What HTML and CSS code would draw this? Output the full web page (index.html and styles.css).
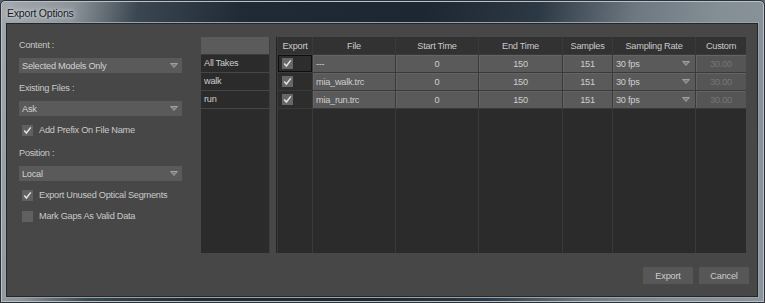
FILE: index.html
```html
<!DOCTYPE html>
<html>
<head>
<meta charset="utf-8">
<link rel="stylesheet" href="styles.css">
</head>
<body>
<div class="window">
  <div class="titlebar"><span class="title">Export Options</span></div>
  <div class="client">
    <div class="main">
      <div class="options">
        <div class="label first">Content :</div>
        <div class="combo"><span>Selected Models Only</span><svg class="arrow" width="8" height="5" viewBox="0 0 8 5"><path d="M0.5 0.5 H7.5 L4 4.5 Z" fill="#7e7e7e" stroke="#acacac" stroke-width="0.8"/></svg></div>
        <div class="label">Existing Files :</div>
        <div class="combo"><span>Ask</span><svg class="arrow" width="8" height="5" viewBox="0 0 8 5"><path d="M0.5 0.5 H7.5 L4 4.5 Z" fill="#7e7e7e" stroke="#acacac" stroke-width="0.8"/></svg></div>
        <div class="check c1"><span class="box"><svg width="11" height="11" viewBox="0 0 11 11"><path d="M2.2 5.6 L4.4 8 L8.8 2.4" fill="none" stroke="#e2e2e2" stroke-width="1.5"/></svg></span>Add Prefix On File Name</div>
        <div class="label">Position :</div>
        <div class="combo"><span>Local</span><svg class="arrow" width="8" height="5" viewBox="0 0 8 5"><path d="M0.5 0.5 H7.5 L4 4.5 Z" fill="#7e7e7e" stroke="#acacac" stroke-width="0.8"/></svg></div>
        <div class="check c2"><span class="box"><svg width="11" height="11" viewBox="0 0 11 11"><path d="M2.2 5.6 L4.4 8 L8.8 2.4" fill="none" stroke="#e2e2e2" stroke-width="1.5"/></svg></span>Export Unused Optical Segments</div>
        <div class="check c3"><span class="box"></span>Mark Gaps As Valid Data</div>
      </div>

      <div class="takes">
        <div class="takes-head"></div>
        <div class="take">All Takes</div>
        <div class="take">walk</div>
        <div class="take">run</div>
        <div class="takes-fill"></div>
      </div>

      <div class="splitter"></div>

      <div class="grid">
        <div class="hd">Export</div>
        <div class="hd">File</div>
        <div class="hd">Start Time</div>
        <div class="hd">End Time</div>
        <div class="hd">Samples</div>
        <div class="hd">Sampling Rate</div>
        <div class="hd">Custom</div>

        <div class="cell exp focus"><span class="box"><svg width="11" height="11" viewBox="0 0 11 11"><path d="M2.2 5.6 L4.4 8 L8.8 2.4" fill="none" stroke="#e2e2e2" stroke-width="1.5"/></svg></span></div>
        <div class="cell left">---</div>
        <div class="cell">0</div>
        <div class="cell">150</div>
        <div class="cell">151</div>
        <div class="cell rate"><span>30 fps</span><svg class="arrow" width="8" height="5" viewBox="0 0 8 5"><path d="M0.5 0.5 H7.5 L4 4.5 Z" fill="#7e7e7e" stroke="#acacac" stroke-width="0.8"/></svg></div>
        <div class="cell custom">30.00</div>

        <div class="cell exp"><span class="box"><svg width="11" height="11" viewBox="0 0 11 11"><path d="M2.2 5.6 L4.4 8 L8.8 2.4" fill="none" stroke="#e2e2e2" stroke-width="1.5"/></svg></span></div>
        <div class="cell left">mia_walk.trc</div>
        <div class="cell">0</div>
        <div class="cell">150</div>
        <div class="cell">151</div>
        <div class="cell rate"><span>30 fps</span><svg class="arrow" width="8" height="5" viewBox="0 0 8 5"><path d="M0.5 0.5 H7.5 L4 4.5 Z" fill="#7e7e7e" stroke="#acacac" stroke-width="0.8"/></svg></div>
        <div class="cell custom">30.00</div>

        <div class="cell exp"><span class="box"><svg width="11" height="11" viewBox="0 0 11 11"><path d="M2.2 5.6 L4.4 8 L8.8 2.4" fill="none" stroke="#e2e2e2" stroke-width="1.5"/></svg></span></div>
        <div class="cell left">mia_run.trc</div>
        <div class="cell">0</div>
        <div class="cell">150</div>
        <div class="cell">151</div>
        <div class="cell rate"><span>30 fps</span><svg class="arrow" width="8" height="5" viewBox="0 0 8 5"><path d="M0.5 0.5 H7.5 L4 4.5 Z" fill="#7e7e7e" stroke="#acacac" stroke-width="0.8"/></svg></div>
        <div class="cell custom">30.00</div>

        <div class="fill"></div>
        <div class="fill"></div>
        <div class="fill"></div>
        <div class="fill"></div>
        <div class="fill"></div>
        <div class="fill"></div>
        <div class="fill"></div>
      </div>
    </div>
    <div class="footer">
      <div class="btn">Export</div>
      <div class="btn">Cancel</div>
    </div>
  </div>
</div>
</body>
</html>
```

FILE: styles.css
```css
* { box-sizing: border-box; }
html, body { margin: 0; padding: 0; }
body {
  width: 765px;
  height: 303px;
  overflow: hidden;
  font-family: "Liberation Sans", Arial, sans-serif;
  font-size: 9.2px;
  color: #c8c8c8;
  background: #5a6570;
}
.window {
  width: 765px;
  height: 303px;
  display: flex;
  flex-direction: column;
  border: 1px solid #2b3137;
  border-radius: 5px 5px 0 0;
  background: linear-gradient(100deg, #a3a9ae 0%, #8c949a 9%, #3a4650 17%, #1f2a34 30%, #1d2731 52%, #2c3843 66%, #6d7881 78%, #848e95 88%, #8b959b 100%);
  box-shadow: inset 0 0 0 1px #b9c0c6;
  padding: 0 6px 5px 5px;
}
.titlebar {
  height: 22px;
  display: flex;
  align-items: center;
  flex-shrink: 0;
}
.title {
  font-family: "Liberation Sans", Arial, sans-serif;
  font-size: 10.5px;
  color: #151a1f;
  letter-spacing: -0.2px;
  margin-left: 1px;
  margin-top: 1px;
  text-shadow: 0 0 6px #d8dde0, 0 0 3px #d8dde0;
}
.client {
  flex: 1;
  background: #464746;
  border: 1px solid #22272c;
  display: flex;
  flex-direction: column;
  box-shadow: 0 0 0 1px #9aa3ab;
}
.main {
  display: flex;
  padding: 13px 0 0 12px;
  height: 229px;
}
.options {
  width: 163px;
  display: flex;
  flex-direction: column;
  letter-spacing: -0.25px;
}
.label {
  height: 16px;
  line-height: 17px;
  margin-top: 7px;
  padding-left: 0;
}
.label.first { margin-top: 0; }
.combo {
  height: 15px;
  margin-top: 5px;
  background: #5a5a5a;
  display: flex;
  align-items: center;
  justify-content: space-between;
  padding: 0 4px 0 3px;
  color: #d2d2d2;
}
.arrow { display: block; flex-shrink: 0; }
.check {
  height: 16px;
  display: flex;
  align-items: center;
  padding-left: 3px;
  color: #cacaca;
}
.check.c1 { margin-top: 6px; }
.check.c2 { margin-top: 6px; }
.check.c3 { margin-top: 5px; }
.box {
  width: 11px;
  height: 11px;
  background: #606060;
  display: inline-flex;
  margin-right: 6px;
  flex-shrink: 0;
}
.box svg { display: block; }
.takes {
  margin-left: 19px;
  width: 69px;
  display: flex;
  flex-direction: column;
  height: 216px;
  border-right: 1px solid #3e3e3e;
}
.takes-head {
  height: 18px;
  background: #5b5b5b;
  border-bottom: 1px solid #3c3c3c;
}
.take {
  height: 18px;
  line-height: 17px;
  background: #2b2b2b;
  border-bottom: 1px solid #464646;
  padding-left: 3px;
  color: #cdcdcd;
  letter-spacing: -0.25px;
}
.takes-fill {
  flex: 1;
  background: #2b2b2b;
}
.splitter {
  width: 8px;
  height: 216px;
  border-right: 1px solid #383838;
  box-shadow: inset -1px 0 0 #262626;
  margin-right: 0;
}
.grid {
  width: 468px;
  height: 216px;
  display: grid;
  grid-template-columns: 34px 82px 82px 83px 49px 82px 50px;
  grid-template-rows: 17px 17px 17px 17px 1fr;
  gap: 1px;
  background: #3a3a3a;
  letter-spacing: -0.25px;
}
.hd {
  background: #323232;
  display: flex;
  align-items: center;
  justify-content: center;
  color: #c9c9c9;
}
.cell {
  background: #5a5a5a;
  box-shadow: inset 1px 1px 0 #646464;
  display: flex;
  align-items: center;
  justify-content: center;
  color: #cfcfcf;
}
.cell.left { justify-content: flex-start; padding-left: 3px; }
.cell.exp {
  background: #2d2d2d;
  box-shadow: none;
  justify-content: flex-start;
  padding-left: 4px;
}
.cell.exp .box { background: #676767; margin-right: 0; }
.cell.focus { border: 1px solid #0e0e0e; padding-left: 3px; }
.cell.rate { justify-content: space-between; padding: 0 5px 0 3px; }
.cell.custom { background: #555555; color: #757575; }
.fill { background: #2b2b2b; }
.footer {
  display: flex;
  justify-content: flex-end;
  gap: 6px;
  padding: 14px 8px 0 0;
}
.btn {
  width: 50px;
  height: 17px;
  background: #575757;
  display: flex;
  align-items: center;
  justify-content: center;
  color: #cdcdcd;
  letter-spacing: -0.2px;
}
```
